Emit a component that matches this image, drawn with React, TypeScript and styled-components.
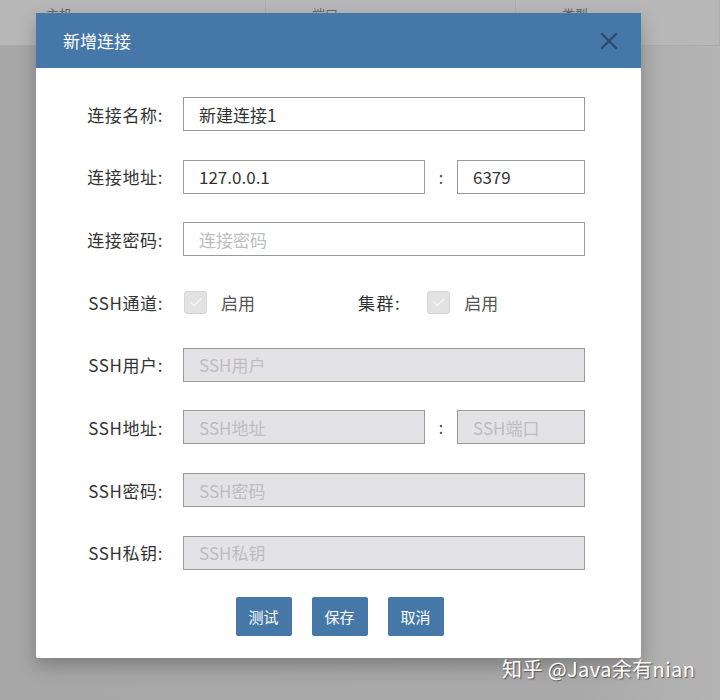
import React from "react";
import styled, { createGlobalStyle } from "styled-components";

const Global = createGlobalStyle`
  html, body {
    margin: 0;
    padding: 0;
  }
  body {
    font-family: "Noto Sans CJK SC", "Noto Sans", sans-serif;
  }
`;

const App = () => {
  return (
    <>
      <Global />
      <Page>
        <TableHead>
          <HeadCell>主机</HeadCell>
          <HeadCell>端口</HeadCell>
          <HeadCell>类型</HeadCell>
        </TableHead>

        <Modal>
          <ModalHead>
            <Title>新增连接</Title>
            <Close>
              <svg width="18" height="18" viewBox="0 0 18 18">
                <path d="M2 2 L16 16 M16 2 L2 16" stroke="#2c4b70" strokeWidth="2.4" strokeLinecap="round" />
              </svg>
            </Close>
          </ModalHead>

          <Body>
            <Row>
              <Label>连接名称:</Label>
              <Input defaultValue="新建连接1" />
            </Row>

            <Row>
              <Label>连接地址:</Label>
              <Pair>
                <Input defaultValue="127.0.0.1" />
                <Colon>:</Colon>
                <Input defaultValue="6379" />
              </Pair>
            </Row>

            <Row>
              <Label>连接密码:</Label>
              <Input placeholder="连接密码" />
            </Row>

            <Row>
              <Label>SSH通道:</Label>
              <Checks>
                <Check>
                  <Box>
                    <svg width="14" height="10" viewBox="0 0 14 10">
                      <path d="M1.5 5 L5 8.5 L12.5 1.5" stroke="#f4f4f4" strokeWidth="1.4" fill="none" />
                    </svg>
                  </Box>
                  <CheckText>启用</CheckText>
                </Check>
                <SubLabel>集群:</SubLabel>
                <Check>
                  <Box>
                    <svg width="14" height="10" viewBox="0 0 14 10">
                      <path d="M1.5 5 L5 8.5 L12.5 1.5" stroke="#f4f4f4" strokeWidth="1.4" fill="none" />
                    </svg>
                  </Box>
                  <CheckText>启用</CheckText>
                </Check>
              </Checks>
            </Row>

            <Row>
              <Label>SSH用户:</Label>
              <Input disabled placeholder="SSH用户" />
            </Row>

            <Row>
              <Label>SSH地址:</Label>
              <Pair>
                <Input disabled placeholder="SSH地址" />
                <Colon>:</Colon>
                <Input disabled placeholder="SSH端口" />
              </Pair>
            </Row>

            <Row>
              <Label>SSH密码:</Label>
              <Input disabled placeholder="SSH密码" />
            </Row>

            <Row>
              <Label>SSH私钥:</Label>
              <Input disabled placeholder="SSH私钥" />
            </Row>
          </Body>

          <Buttons>
            <Button>测试</Button>
            <Button>保存</Button>
            <Button>取消</Button>
          </Buttons>
        </Modal>

        <Mark>知乎 @Java余有nian</Mark>
      </Page>
    </>
  );
};

export default App;

const Page = styled.div`
  position: relative;
  width: 720px;
  height: 700px;
  overflow: hidden;
  background: linear-gradient(90deg, #a7a7a7 0%, #a9a9a9 80%, #b4b4b4 100%);
`;

const TableHead = styled.div`
  height: 45px;
  display: grid;
  grid-template-columns: 266px 250px 1fr;
  background-color: #b7b7b7;
  border-bottom: 1px solid #a9a9a9;
`;

const HeadCell = styled.div`
  padding: 4px 0 0 46px;
  font-size: 13px;
  color: #666;
  border-right: 1px solid #adadad;
`;

const Modal = styled.div`
  position: absolute;
  left: 36px;
  top: 13px;
  width: 605px;
  height: 645px;
  background-color: #fff;
  border-radius: 2px;
  box-shadow: 0 8px 18px rgba(0, 0, 0, 0.25);
  display: flex;
  flex-direction: column;
`;

const ModalHead = styled.div`
  height: 55px;
  background-color: #4577a8;
  display: flex;
  align-items: center;
  justify-content: space-between;
  padding: 0 23px 0 27px;
`;

const Title = styled.div`
  color: #fff;
  font-size: 17px;
`;

const Close = styled.div`
  display: flex;
  cursor: pointer;
`;

const Body = styled.div`
  padding-top: 29px;
  display: flex;
  flex-direction: column;
  gap: 28.7px;
`;

const Row = styled.div`
  display: flex;
  align-items: center;
  height: 34px;
`;

const Label = styled.div`
  width: 127px;
  flex-shrink: 0;
  margin-right: 20px;
  text-align: right;
  font-size: 17px;
  letter-spacing: 0.6px;
  color: #333;
`;

const Pair = styled.div`
  display: grid;
  grid-template-columns: 242px 32px 128px;
  height: 34px;
`;

const Colon = styled.div`
  display: flex;
  align-items: center;
  justify-content: center;
  font-size: 16px;
  color: #444;
`;

const Input = styled.input`
  box-sizing: border-box;
  width: 402px;
  height: 34px;
  padding: 0 0 0 15px;
  border: 1.5px solid #999;
  background-color: #fff;
  font-family: "Noto Sans CJK SC", "Noto Sans", sans-serif;
  font-size: 17px;
  color: #333;
  outline: none;

  ${Pair} & {
    width: 100%;
  }

  &::placeholder {
    color: #bdbdbd;
  }

  &:disabled {
    background-color: #e3e3e5;
  }
`;

const Checks = styled.div`
  display: flex;
  align-items: center;
`;

const Check = styled.div`
  display: flex;
  align-items: center;
`;

const Box = styled.div`
  width: 23px;
  height: 23px;
  box-sizing: border-box;
  border: 1px solid #d6d6d6;
  border-radius: 3px;
  background-color: #e2e2e2;
  display: flex;
  align-items: center;
  justify-content: center;
  margin-left: 1px;
`;

const CheckText = styled.div`
  margin-left: 14px;
  font-size: 17px;
  color: #555;
`;

const SubLabel = styled.div`
  margin: 0 25px 0 103px;
  font-size: 17px;
  letter-spacing: 1.5px;
  color: #333;
`;

const Buttons = styled.div`
  display: flex;
  justify-content: center;
  gap: 20px;
  margin-top: 27px;
  padding-left: 2px;
`;

const Button = styled.button`
  width: 56px;
  height: 39px;
  border: none;
  border-radius: 2px;
  background-color: #4577a8;
  color: #fff;
  font-family: "Noto Sans CJK SC", "Noto Sans", sans-serif;
  font-size: 15px;
  cursor: pointer;
`;

const Mark = styled.div`
  position: absolute;
  left: 502px;
  top: 654px;
  font-size: 20px;
  letter-spacing: 0.4px;
  color: #fff;
  text-shadow: 1px 1px 1px #555;
`;
